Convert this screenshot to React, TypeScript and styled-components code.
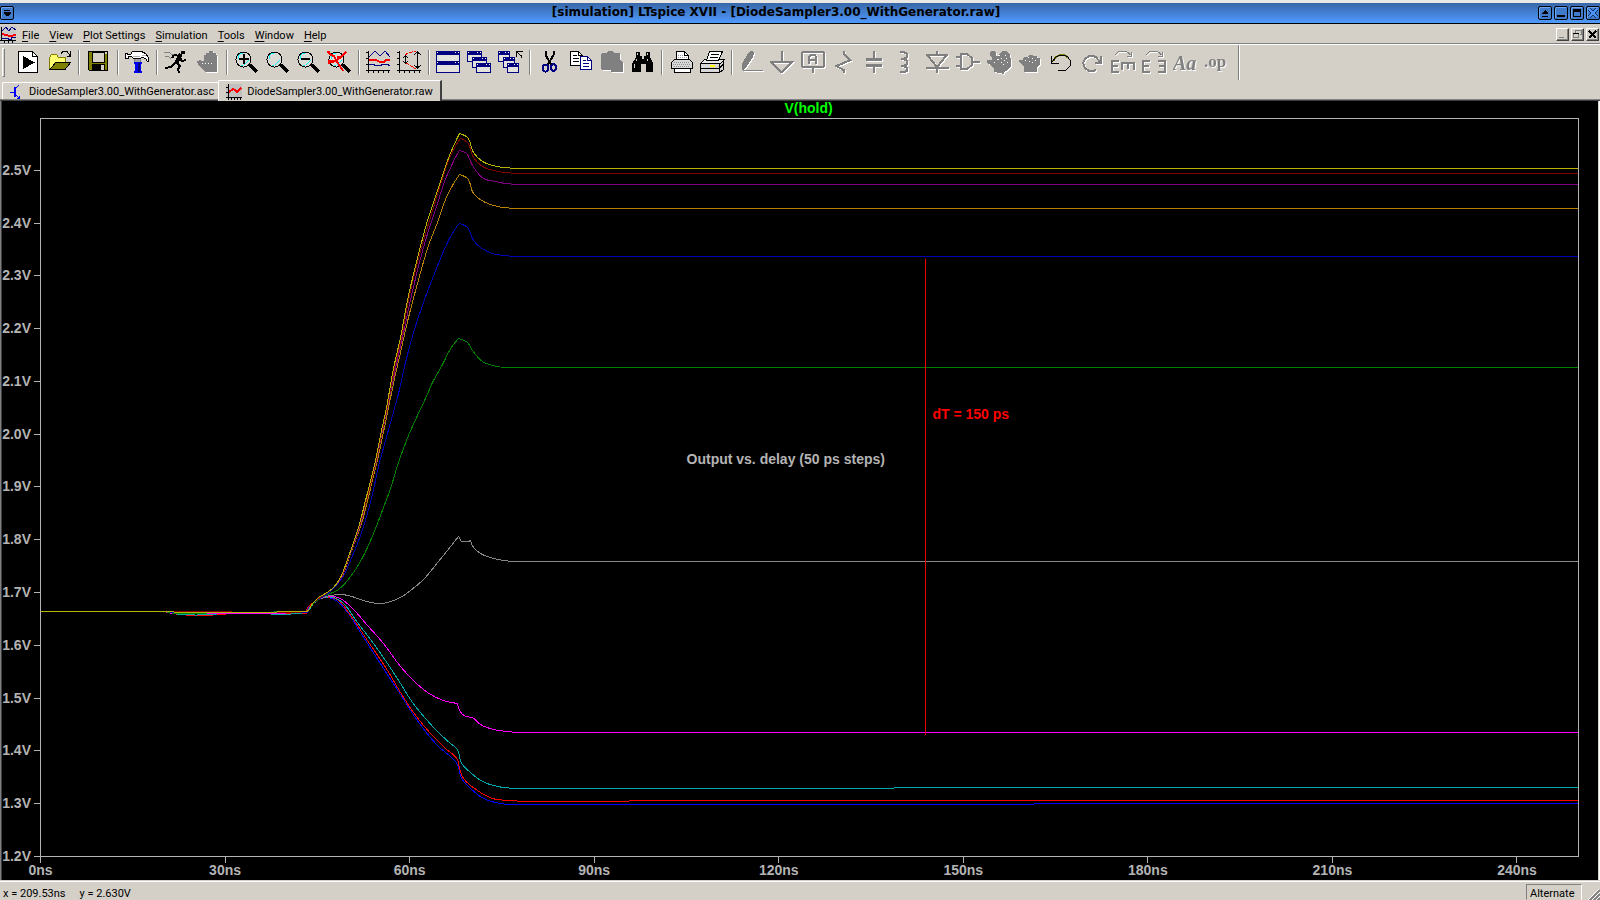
import React from "react";
import styled, { createGlobalStyle, css } from "styled-components";

const Global = createGlobalStyle`
  * { box-sizing: border-box; }
  html, body { margin: 0; padding: 0; background: #d4d0c8; }
  button { font: inherit; color: inherit; margin: 0; padding: 0; border: 0; background: none; }
`;

const FACE = "#d4d0c8";
const SHADOW = "#808080";
const DARK = "#404040";

const Window = styled.div`
  display: flex;
  flex-direction: column;
  min-height: 100vh;
  background: ${FACE};
  color: #000;
  font: 11px/16px Roboto, "Noto Sans", sans-serif;
`;

/* ---------- title bar ---------- */

const TitleBar = styled.header`
  display: flex;
  align-items: center;
  height: 24px;
  border-top: 3px solid #e9e8e5;
  border-bottom: 1px solid #000;
  background: linear-gradient(#3867a8, #4f9aff);
`;

const TitleText = styled.h1`
  flex: 1;
  margin: 0;
  padding: 0 10px 2px;
  text-align: center;
  white-space: nowrap;
  font: bold 12px/18px "DejaVu Sans", sans-serif;
`;

const FrameButtons = styled.div`
  display: flex;
  gap: 2px;
`;

const FrameButton = styled.button`
  display: block;
  width: 14px;
  height: 14px;
  border: 1px solid #000;
  border-radius: 2px;
  background: #3f7acb;
  box-shadow: inset 1px 1px 0 #6aa5f2;
  svg { display: block; }
`;

/* ---------- menu bar ---------- */

const MenuBar = styled.nav`
  display: flex;
  align-items: center;
  height: 21px;
  border-bottom: 1px solid #fff;
  box-shadow: inset 0 -1px 0 ${SHADOW};
`;

const MenuList = styled.div`
  display: flex;
  padding-left: 1px;
`;

const MenuItem = styled.button`
  padding: 3px 5px 0;
  line-height: 17px;
  u { text-underline-offset: 2px; }
`;

const ChildButtons = styled.div`
  display: flex;
  gap: 2px;
  margin-left: auto;
  padding-right: 1px;
`;

const ChildButton = styled.button`
  width: 13px;
  height: 13px;
  border: 1px solid;
  border-color: #fff ${DARK} ${DARK} #fff;
  box-shadow: inset -1px -1px 0 ${SHADOW};
  svg { display: block; }
`;

/* ---------- toolbar ---------- */

const ToolBar = styled.div`
  display: flex;
  align-items: stretch;
  height: 35px;
`;

const Grip = styled.span`
  width: 3px;
  margin: 3px 8px 3px 2px;
  border: 1px solid;
  border-color: #fff ${SHADOW} ${SHADOW} #fff;
`;

const Group = styled.div`
  display: flex;
  & + & {
    margin-left: 8px;
    position: relative;
  }
  & + &::before {
    content: "";
    position: absolute;
    left: -5px;
    top: 5px;
    bottom: 5px;
    width: 2px;
    background: linear-gradient(to right, ${SHADOW} 50%, #fff 50%);
  }
`;

const ToolButton = styled.button`
  display: flex;
  align-items: center;
  justify-content: center;
  width: 31px;
  svg { display: block; }
  &:disabled svg { filter: drop-shadow(1px 1px 0 #fff); }
`;

const BarEnd = styled.span`
  width: 2px;
  margin-left: 6px;
  background: linear-gradient(to right, ${SHADOW} 50%, #fff 50%);
`;

/* ---------- document tabs ---------- */

const TabStrip = styled.div`
  display: flex;
  align-items: flex-end;
  height: 21px;
  padding-left: 2px;
  border-bottom: 1px solid ${DARK};
  box-shadow: inset 0 -1px 0 ${SHADOW};
`;

const Tab = styled.button<{ $active?: boolean }>`
  display: flex;
  align-items: center;
  gap: 5px;
  height: 17px;
  padding: 2px 4px 0 6px;
  border-top: 1px solid #fff;
  border-left: 1px solid #fff;
  border-radius: 2px 0 0 0;
  margin-bottom: 1px;
  white-space: nowrap;
  svg { display: block; }
  ${(p) =>
    p.$active &&
    css`
      height: 21px;
      margin-bottom: -1px;
      padding: 1px 7px 0 7px;
      border-right: 2px solid ${DARK};
      background: ${FACE};
    `}
`;

/* ---------- waveform pane ---------- */

const Pane = styled.main`
  flex: 1;
  display: grid;
  grid-template-columns: 39px 1fr;
  grid-template-rows: 17px 1fr 23px;
  padding-right: 21px;
  background: #000;
  border-left: 1px solid ${SHADOW};
  box-shadow: inset 1px 0 0 ${DARK}, inset -1px 0 0 #fff, inset -2px 0 0 ${FACE};
  color: #b4b4b4;
  font: bold 14px/16px "Liberation Sans", Arial, sans-serif;
`;

const TraceName = styled.h2`
  grid-column: 1 / 3;
  margin: 0;
  padding-left: 37px;
  text-align: center;
  font: inherit;
  line-height: 14px;
  color: #00ff00;
`;

const YAxis = styled.div`
  display: grid;
  grid-auto-rows: 1fr;
`;

const YTick = styled.div`
  display: flex;
  align-items: center;
  justify-content: flex-end;
  align-self: end;
  height: 15px;
  line-height: 15px;
  margin-bottom: -7px;
  &::after {
    content: "";
    width: 6px;
    height: 1px;
    margin-left: 3px;
    background: #b4b4b4;
  }
`;

const Plot = styled.div`
  position: relative;
  min-height: 300px;
  border: 1px solid #b4b4b4;
`;

const Curves = styled.svg`
  position: absolute;
  inset: 0;
  width: 100%;
  height: 100%;
  path, line {
    fill: none;
    stroke-width: 1px;
    vector-effect: non-scaling-stroke;
  }
`;

const Note = styled.span<{ $x: number; $y: number; $color: string }>`
  position: absolute;
  left: ${(p) => p.$x}%;
  top: ${(p) => p.$y}%;
  color: ${(p) => p.$color};
  white-space: nowrap;
`;

const XAxis = styled.div`
  grid-column: 2;
  display: grid;
  grid-template-columns: repeat(8, 30fr) 10fr;
  padding-right: 1px;
`;

const XTick = styled.div`
  display: flex;
  flex-direction: column;
  align-items: center;
  width: 1px;
  line-height: 14px;
  white-space: nowrap;
  &::before {
    content: "";
    flex: none;
    width: 1px;
    height: 6px;
    background: #b4b4b4;
  }
`;

/* ---------- status bar ---------- */

const StatusBar = styled.footer`
  display: flex;
  gap: 14px;
  height: 20px;
  padding: 4px 0 0 3px;
  border-top: 1px solid ${FACE};
  box-shadow: inset 0 1px 0 #fff;
  line-height: 18px;
  overflow: hidden;
`;

const StatusCell = styled.span`
  width: 56px;
  margin: -1px 0 0 auto;
  padding-left: 3px;
  border: 1px solid;
  border-color: ${SHADOW} #fff transparent ${SHADOW};
`;

const SizeGrip = styled.svg`
  display: block;
  margin-left: -8px;
`;

/* ---------- icons ---------- */

const Icon = ({ children, w = 25, h = 25 }: { children: React.ReactNode; w?: number; h?: number }) => (
  <svg width={w} height={h} viewBox={`0 0 ${w} ${h}`} fill="none" shapeRendering="crispEdges" aria-hidden="true">
    {children}
  </svg>
);

const G = "#808080";
const NAVY = "#000080";

const Lens = () => (
  <>
    <path d="M16 15l7 7" stroke="#000" strokeWidth="3" />
    <circle cx="9.5" cy="9.5" r="7.5" fill="#dcdad4" stroke="#000" strokeWidth="1" />
    <path d="M4 9v-3l3-3h2M10 15l5-5M7 15l2 1" stroke="#00ffff" strokeWidth="1" />
  </>
);

const MiniWindow = ({ x, y, w = 14, h = 10 }: { x: number; y: number; w?: number; h?: number }) => (
  <>
    <rect x={x + 0.5} y={y + 0.5} width={w} height={h} fill="#e4e2dd" stroke={NAVY} />
    <path d={`M${x} ${y + 2}h${w + 1}`} stroke={NAVY} strokeWidth="4" />
    <path d={`M${x + 1} ${y + 1.5}h1M${x + w - 4} ${y + 1.5}h1M${x + w - 1} ${y + 1.5}h1`} stroke="#fff" />
  </>
);

const art: Record<string, React.ReactNode> = {
  "New schematic": (
    <>
      <path d="M2.5 1.5h14l5 5v16h-19z" fill="#fff" stroke="#000" />
      <path d="M16.5 1.5v5h5" stroke="#000" />
      <path d="M7 6v13l12-6.5z" fill="#000" />
    </>
  ),
  Open: (
    <>
      <path d="M2.5 19.5v-12l2-3h5l2 3h7v5" fill="#ffff70" stroke="#808000" />
      <path d="M3 19.5l6-7.5h15l-6 7.5z" fill="#808000" stroke="#000" />
      <path d="M14 3.5l2-2h4l3 4M23.5 1v5h-4" stroke="#000" />
    </>
  ),
  Save: (
    <>
      <path d="M2.5 1.5h19v19h-18l-1-1z" fill="#808000" stroke="#000" />
      <path d="M6 2h12v10h-12z" fill={FACE} stroke="#000" />
      <path d="M19 2h2v2h-2z" fill={FACE} />
      <path d="M6 14h13v7h-13z" fill="#000" />
      <path d="M15 15h3v5h-3z" fill={FACE} />
    </>
  ),
  "Control panel": (
    <>
      <path d="M9 12h8v2h-1v7h1v2h-8v-2h1v-7h-1z" fill="#0000f0" />
      <path d="M13 13h2v9h-2z" fill={NAVY} />
      <path d="M10 6h5v6h-5z" fill="#a0a0a0" />
      <path d="M9.5 7v5M15.5 7v5" stroke={G} />
      <path
        d="M.5 7.5v-4h2v1h3l2-3h9l4 2 3 4v4h-1l-2-3-3-1-3 1h-6l-2-2h-3v2h-3z"
        fill="#fff"
        stroke="#000"
      />
      <path d="M8 6.5h7M17 5.5h4" stroke="#b0b0b0" />
    </>
  ),
  Run: (
    <>
      <path d="M17 1h4v3h-4z" fill="#000" />
      <path d="M17 4l-5 9" stroke="#000" strokeWidth="4" />
      <path d="M16 6l-6-1-2 3M16 8l2 3 4-1M12 12l4 4-2 3 1 4M11 13l-4 4-6 1" stroke="#000" strokeWidth="2" />
      <path d="M0 2h5l2 2h3M1 6l4 1 2 2" stroke={G} />
    </>
  ),
  Halt: (
    <>
      <path d="M9 5h2v-2h3v-2h4v2h3v2h1v17h-12l-3-4-4-3-1-4h2v-1h2v1h3z" fill={G} />
      <path d="M7 13h1M10 13h1M13 13h1M16 13h1" stroke="#fff" />
    </>
  ),
  "Zoom in": (
    <>
      <Lens />
      <path d="M5 9h10M10 4v10" stroke="#000" strokeWidth="2" />
    </>
  ),
  "Pan view": <Lens />,
  "Zoom out": (
    <>
      <Lens />
      <path d="M5 9h9" stroke="#000" strokeWidth="2" />
    </>
  ),
  "Zoom full extents": (
    <>
      <Lens />
      <path d="M1 2l3 3 3 1 3 6 3 4 3 5M19 2l-6 6-5 3-3 1-4 1" stroke="#f00" strokeWidth="2" />
      <path d="M0 2h3M1 11h5M10 7h3" stroke="#f00" strokeWidth="2" />
    </>
  ),
  "Pick visible traces": (
    <>
      <path d="M2.5 1v22M0 20.5h24M0 2.5h2M0 8.5h2M0 14.5h2M7.5 21v2M12.5 21v2M17.5 21v2M22.5 21v2" stroke="#000" />
      <path d="M3 7l6-6 5 5 5-5 5 6" stroke={NAVY} />
      <path d="M3 9.5h4l4 1 4 2 4-1 1-2h4" stroke="#f00" strokeWidth="2" />
      <path d="M3 14.5h5v1h7v-1h7v1h2" stroke={NAVY} />
    </>
  ),
  "Autorange y-axis": (
    <>
      <path d="M2.5 1v22M0 20.5h24M0 2.5h2M0 8.5h2M0 14.5h2M7.5 21v2M12.5 21v2M17.5 21v2M22.5 21v2" stroke="#000" />
      <path d="M20.5 2v16M8.5 6v7M17 5l3.5-3 3.5 3M17 15l3.5 3 3.5-3M6 8l2.5-2 2.5 2M6 11l2.5 2 2.5-2" stroke="#000" />
      <path d="M8 5l3-2 4-1 4-1M9 13l5 3 5 3" stroke="#f00" strokeDasharray="4 1" />
    </>
  ),
  "Tile windows": (
    <>
      <MiniWindow x={0} y={1} w={23} h={11} />
      <MiniWindow x={0} y={11} w={23} h={11} />
    </>
  ),
  "Cascade windows": (
    <>
      <MiniWindow x={0} y={1} />
      <MiniWindow x={5} y={7} />
      <MiniWindow x={9} y={13} w={14} h={9} />
    </>
  ),
  "Close windows": (
    <>
      <MiniWindow x={0} y={1} w={11} />
      <MiniWindow x={5} y={7} w={11} />
      <MiniWindow x={9} y={13} w={11} h={9} />
      <path d="M23.5 8v-2l-5-4M18.5 7v-5.5h6" stroke="#000" />
    </>
  ),
  Cut: (
    <>
      <path d="M8.5 1v4l6 10M16.5 1v4l-6 10" stroke="#000" strokeWidth="2" />
      <ellipse cx="8.5" cy="18" rx="2.5" ry="3.5" stroke={NAVY} strokeWidth="2" />
      <ellipse cx="16.5" cy="17.5" rx="2.5" ry="3.5" stroke={NAVY} strokeWidth="2" />
    </>
  ),
  Copy: (
    <>
      <path d="M2.5 1.5h8l4 4v10h-12z" fill="#fff" stroke="#000" />
      <path d="M10.5 1.5v4h4M5 5.5h4M5 8.5h6M5 11.5h6" stroke="#000" />
      <path d="M12.5 6.5h7l4 4v9h-11z" fill="#fff" stroke={NAVY} />
      <path d="M19.5 6.5v4h4M15 10.5h3M15 13.5h6M15 16.5h6" stroke={NAVY} />
    </>
  ),
  Paste: <path d="M2 4l1-1h5l1-2h5l1 2h5l1 1v6l3 3v9h-12v-2h-9l-1-1z" fill={G} />,
  Find: (
    <>
      <path d="M6 2h4v4h2v3h2v-3h2v-4h4v5l3 6v9h-7v-8h-5v8h-9v-8l4-7z" fill="#000" />
      <path d="M7.5 3v2M17.5 3v2M6 9v2M17.5 9v2M4 14v4M14.5 14v1" stroke="#c8d8c0" strokeWidth="1" />
      <path d="M12 7h1v2h-1z" fill="#c8d8c0" />
    </>
  ),
  Print: (
    <>
      <path d="M7.5 9.5v-8h8l4 4v4" fill="#fff" stroke="#000" />
      <path d="M15.5 1.5v4h4" stroke="#000" />
      <path d="M9 5.5h5M9 7.5h9" stroke="#a0a0a0" strokeDasharray="1 1" />
      <path d="M2.5 18.5v-6l3-3h15l3 3v6z" fill="#d8d8d8" stroke="#000" />
      <path d="M5 12.5h16M4 14.5h18M5 16.5h16" stroke="#909090" strokeDasharray="1 1" />
      <path d="M5.5 18.5h16v4h-16z" fill="#fff" stroke="#000" />
    </>
  ),
  "Print preview": (
    <>
      <path d="M.5 13.5l4-4h20l-4 4z" fill="#e8e8e8" stroke="#000" />
      <path d="M6.5 10.5l3-9h13l-4 9z" fill="#fff" stroke="#000" />
      <path d="M11 4.5h8M10 7.5h8" stroke="#000" />
      <path d="M.5 13.5h19v9h-19zM19.5 22.5l4-3v-9M1 18.5h18l4-4" fill="#d8d8d8" stroke="#000" />
      <path d="M10 16h5" stroke="#ffff00" strokeWidth="2" />
    </>
  ),
  Wire: (
    <>
      <path d="M3.5 20.5h20" stroke={G} />
      <path d="M3 20v-6l6-11 2-2h3l1 2-1 4-6 9-4 4z" fill={G} />
    </>
  ),
  Ground: <path d="M11.5 1v10M0 11.5h23l-11 10.5h-1L1 12" stroke={G} strokeWidth="2" />,
  "Label net": (
    <>
      <path d="M2 2h20l1 1v13l-1 1h-20l-1-1v-13z" stroke={G} strokeWidth="2" />
      <path d="M12 17v6M8 14v-7l2-2h4l1 2v7M8 10h7" stroke={G} strokeWidth="2" />
    </>
  ),
  Resistor: <path d="M11.5 1v3l7 6-14 6 7 4v3" stroke={G} strokeWidth="2" />,
  Capacitor: (
    <>
      <path d="M11 1v8M11 16v7" stroke={G} strokeWidth="2" />
      <path d="M3 9.5h16M3 15.5h16" stroke={G} strokeWidth="3" />
    </>
  ),
  Inductor: <path d="M6 2h4l3 2v3l-3 2 3 2v3l-3 2 3 2v3l-3 1h-4M7 9h4M7 16h4" stroke={G} strokeWidth="2" />,
  Diode: <path d="M12 1v4M12 17v6M1 5h22M1 18h23M3 6l9 11 9-11" stroke={G} strokeWidth="2" />,
  Component: <path d="M5 4h6l5 4v7l-5 4h-6zM0 7h5M0 16h5M16 12h8" stroke={G} strokeWidth="2" />,
  Move: (
    <>
      <path d="M7 22v-4l-5-4-2-1v-3h5v-2l-2-2v-4l1-1h4l1 2v3h3l1-3 2-2h4l2 2 2 2v3l1 1v7l-3 4-4 2v2z" fill={G} />
      <path d="M11 5h2M14 8h1M18 5h1M10 9h2M7 12h1M17 10h1M14 12h1M19 8h1M16 14h1M20 12h1" stroke="#fff" />
    </>
  ),
  Drag: (
    <>
      <path d="M6 22v-5l-5-5v-2h4l1-3h3l2-2h3l2 1h3v2h3v6l-3 4v4z" fill={G} />
      <path d="M7 10h1M10 7h1M11 11h1M14 8h1M17 10h1M14 12h1" stroke="#fff" />
    </>
  ),
  Undo: (
    <>
      <path d="M4 11l3-4 4-2h4l5 3" stroke="#808000" strokeWidth="2" />
      <path d="M2.5 6v7h7M3 12l4-5 4-2h4l4 2 3 5-1 4-4 4-4 1-4-1" stroke="#000" />
    </>
  ),
  Redo: <path d="M21 6v7h-6M20 12l-4-5-3-1h-4l-4 3-2 4 2 5 4 3h4l3-1" stroke={G} strokeWidth="2" />,
  Rotate: (
    <>
      <path d="M8 11h-7v11h7M1 16h6M11 20v-7h13M17 13v6M23 13v7" stroke={G} strokeWidth="2" />
      <path d="M3.5 5.5l4-4h8l5 4M20.5 2v4.5h-5" stroke={G} />
    </>
  ),
  Mirror: (
    <>
      <path d="M8 11h-7v11h7M1 16h6M16 11h7v11h-7M17 16h6" stroke={G} strokeWidth="2" />
      <path d="M3.5 5.5l4-4h8l5 4M20.5 2v4.5h-5" stroke={G} />
    </>
  ),
};

const glyphText = (label: string, size: number, italic: boolean, x: number, y: number) => (
  <text
    x={x}
    y={y}
    fill={G}
    fontFamily='"Liberation Serif", serif'
    fontSize={size}
    fontWeight="bold"
    fontStyle={italic ? "italic" : "normal"}
  >
    {label}
  </text>
);
art.Text = glyphText("Aa", 20, true, 0, 20);
art["SPICE directive"] = glyphText(".op", 17, false, 0, 17);

const groups: { names: string[]; disabled?: string[] }[] = [
  { names: ["New schematic", "Open"] },
  { names: ["Save"] },
  { names: ["Control panel"] },
  { names: ["Run", "Halt"], disabled: ["Halt"] },
  { names: ["Zoom in", "Pan view", "Zoom out", "Zoom full extents"] },
  { names: ["Pick visible traces", "Autorange y-axis"] },
  { names: ["Tile windows", "Cascade windows", "Close windows"] },
  { names: ["Cut", "Copy", "Paste", "Find"], disabled: ["Paste"] },
  { names: ["Print", "Print preview"] },
  {
    names: [
      "Wire", "Ground", "Label net", "Resistor", "Capacitor", "Inductor", "Diode", "Component",
      "Move", "Drag", "Undo", "Redo", "Rotate", "Mirror", "Text", "SPICE directive",
    ],
    disabled: [
      "Wire", "Ground", "Label net", "Resistor", "Capacitor", "Inductor", "Diode", "Component",
      "Move", "Drag", "Redo", "Rotate", "Mirror", "Text", "SPICE directive",
    ],
  },
];

const menus: [string, string][] = [
  ["F", "ile"], ["V", "iew"], ["P", "lot Settings"], ["S", "imulation"], ["T", "ools"], ["W", "indow"], ["H", "elp"],
];

/* Traces, lowest settled level first so that the last one is drawn on top. */
const traces: { color: string; points: string }[] = [
  {
    color: "#0000ff",
    points:
      "40,611 163,611 172,613 306,612 307,609 313,602 320,598 328,597 337,601 348,613 360,632 383,668 400,694 412,713 425,731 438,746 455,761 458,767 461,778 467,785 483,798 500,803 515,804 1033,804 1034,803 1578,803",
  },
  {
    color: "#ff0000",
    points:
      "40,611 163,611 178,614 225,614 226,613 306,613 307,607 313,602 320,598 330,597 337,599 348,612 367,640 387,670 400,692 413,712 430,733 445,748 457,759 459,768 463,778 477,790 492,798 510,800 528,801 628,801 629,800 1578,800",
  },
  {
    color: "#00a8a8",
    points:
      "40,611 163,611 180,614 216,614 218,612 258,612 259,613 298,613 307,611 313,603 320,598 333,597 343,603 357,622 373,643 387,663 400,683 412,702 425,718 437,731 450,743 455,747 458,751 459,757 462,764 470,772 482,781 497,786 520,788 893,788 894,787 1578,787",
  },
  {
    color: "#ff00ff",
    points:
      "40,611 163,611 172,613 270,613 307,611 313,603 320,598 333,596 340,598 353,609 367,625 383,643 400,666 413,680 427,692 443,700 457,703 459,710 465,716 472,717 480,724 493,729 507,731 520,732 1578,732",
  },
  {
    color: "#888888",
    points:
      "40,611 163,611 175,613 307,611 313,603 323,597 337,594 348,595 363,600 378,603 387,602 400,597 410,590 423,579 438,561 447,550 458,536 461,541 468,541 470,540 473,547 480,553 490,557 503,560 517,561 1578,561",
  },
  {
    color: "#008000",
    points:
      "40,611 163,611 175,613 307,611 313,603 323,596 330,593 338,589 347,580 357,566 367,547 375,528 383,507 390,488 398,462 408,435 417,415 425,398 433,380 442,364 449,350 453,344 458,338 467,342 472,350 482,361 492,365 508,367 1578,367",
  },
  {
    color: "#0000b4",
    points:
      "40,611 163,611 175,612 307,612 313,602 323,596 330,591 342,577 350,560 360,535 370,502 380,458 397,397 405,362 413,332 423,302 432,278 440,258 449,238 457,225 459,223 467,227 473,240 480,247 492,253 503,255 522,256 1578,256",
  },
  {
    color: "#b48200",
    points:
      "40,611 173,611 290,612 307,611 313,602 323,595 332,588 341,577 350,553 362,520 370,488 380,446 393,383 400,352 408,317 417,283 428,245 437,222 445,199 452,185 459,174 467,178 473,193 483,201 493,205 503,207 527,208 1578,208",
  },
  {
    color: "#820082",
    points:
      "40,611 173,611 290,612 307,611 313,602 323,595 332,588 341,577 348,558 359,527 366,500 376,460 380,440 387,407 395,368 402,337 411,295 420,258 428,230 437,203 444,181 452,163 457,153 459,150 466,153 472,165 483,178 495,181 505,183 531,184 1578,184",
  },
  {
    color: "#820000",
    points:
      "40,611 173,611 290,612 307,611 313,602 323,595 332,588 341,576 348,557 358,528 366,500 376,459 380,438 387,405 394,368 401,337 409,295 418,258 426,230 433,207 442,178 448,160 457,142 460,138 467,142 473,157 482,166 493,170 504,172 528,173 1578,173",
  },
  {
    color: "#b4b400",
    points:
      "40,611 173,611 174,612 276,612 277,611 307,611 313,602 318,597 325,593 332,588 340,577 347,559 358,527 365,500 375,460 380,435 386,407 393,368 400,337 408,295 417,258 425,227 433,202 441,178 449,155 457,137 459,133 467,137 473,152 482,161 492,165 503,167 526,168 1578,168",
  },
];

/* Joins the samples with cubic segments; sharp turns and long flat runs stay straight. */
function smoothPath(points: string): string {
  const p = points.split(" ").map((s) => s.split(",").map(Number));
  const len = (i: number) => Math.hypot(p[i + 1][0] - p[i][0], p[i + 1][1] - p[i][1]);
  const dir = (i: number) => [(p[i + 1][0] - p[i][0]) / len(i), (p[i + 1][1] - p[i][1]) / len(i)];
  const tangent = (i: number) => {
    if (i === 0 || i === p.length - 1) return [0, 0];
    const a = dir(i - 1);
    const b = dir(i);
    if (a[0] * b[0] + a[1] * b[1] < 0.7 || len(i - 1) < 4 || len(i) < 4) return [0, 0];
    if (len(i - 1) > 50) return a;
    if (len(i) > 50) return b;
    const s = [a[0] + b[0], a[1] + b[1]];
    const l = Math.hypot(s[0], s[1]);
    return [s[0] / l, s[1] / l];
  };
  let d = `M${p[0][0]} ${p[0][1]}`;
  for (let i = 0; i < p.length - 1; i++) {
    const [x, y] = p[i + 1];
    if (len(i) > 50) {
      d += `L${x} ${y}`;
      continue;
    }
    const k = len(i) / 3;
    const t = tangent(i);
    const u = tangent(i + 1);
    d += `C${p[i][0] + t[0] * k} ${p[i][1] + t[1] * k} ${x - u[0] * k} ${y - u[1] * k} ${x} ${y}`;
  }
  return d;
}

const volts = ["2.5V", "2.4V", "2.3V", "2.2V", "2.1V", "2.0V", "1.9V", "1.8V", "1.7V", "1.6V", "1.5V", "1.4V", "1.3V", "1.2V"];
const times = ["0ns", "30ns", "60ns", "90ns", "120ns", "150ns", "180ns", "210ns", "240ns"];

export default function App() {
  return (
    <Window>
      <Global />
      <TitleBar>
        <FrameButton aria-label="Window menu">
          <Icon w={12} h={12}>
            <path d="M3 3h6M3 5h6v1h-1v1h-1v1h-2v-1h-1v-1h-1z" fill="#000" stroke="#000" />
          </Icon>
        </FrameButton>
        <TitleText>[simulation] LTspice XVII - [DiodeSampler3.00_WithGenerator.raw]</TitleText>
        <FrameButtons>
          <FrameButton aria-label="Shade">
            <Icon w={12} h={12}>
              <path d="M3 9h6v1h-6zM3 7v-1h1v-1h1v-1h1v-1h1v1h1v1h1v2z" fill="#000" />
            </Icon>
          </FrameButton>
          <FrameButton aria-label="Minimize">
            <Icon w={12} h={12}><path d="M2 8h8v2h-8z" fill="#000" /></Icon>
          </FrameButton>
          <FrameButton aria-label="Maximize">
            <Icon w={12} h={12}><path d="M2 2h8v8h-8zM3 5v4h6v-4z" fill="#000" fillRule="evenodd" /></Icon>
          </FrameButton>
          <FrameButton aria-label="Close">
            <Icon w={12} h={12}>
              <path d="M2 2l8 8M10 2l-8 8" stroke="#12305c" strokeWidth="3" />
              <path d="M2 2l8 8M10 2l-8 8" stroke="#4a92f5" strokeWidth="2" />
            </Icon>
          </FrameButton>
        </FrameButtons>
      </TitleBar>

      <MenuBar aria-label="Main menu">
        <Icon w={16} h={17}>
          <path d="M0 0h16v17h-16z" fill="#c8c8c8" />
          <path d="M1.5 1v14M0 14.5h16M4.5 15v2M8.5 15v2M12.5 15v2" stroke="#000" />
          <path d="M2 5l4-4 3 4 3-4 4 3" stroke={NAVY} />
          <path d="M2 8l4 1 4 1 6-1" stroke="#f00" strokeWidth="2" />
          <path d="M2 12.5h6v1h3v-2h5" stroke={NAVY} />
        </Icon>
        <MenuList>
          {menus.map(([k, rest]) => (
            <MenuItem key={k}><u>{k}</u>{rest}</MenuItem>
          ))}
        </MenuList>
        <ChildButtons>
          <ChildButton aria-label="Minimize document">
            <Icon w={11} h={11}><path d="M2 8.5h5" stroke={G} strokeWidth="1" /></Icon>
          </ChildButton>
          <ChildButton aria-label="Restore document">
            <Icon w={11} h={11}><path d="M3.5 4v-2.5h6v4h-2M1.5 4.5h5v4h-5z" stroke={G} /><path d="M1 4.5h6" stroke="#000" /></Icon>
          </ChildButton>
          <ChildButton aria-label="Close document">
            <Icon w={11} h={11}><path d="M2 2l7 7M9 2l-7 7" stroke="#000" strokeWidth="2" /></Icon>
          </ChildButton>
        </ChildButtons>
      </MenuBar>

      <ToolBar role="toolbar" aria-label="Tools">
        <Grip />
        {groups.map((g) => (
          <Group key={g.names[0]}>
            {g.names.map((n) => (
              <ToolButton key={n} aria-label={n} disabled={g.disabled?.includes(n)}>
                <Icon>{art[n]}</Icon>
              </ToolButton>
            ))}
          </Group>
        ))}
        <BarEnd />
      </ToolBar>

      <TabStrip role="tablist">
        <Tab role="tab" aria-selected={false}>
          <Icon w={15} h={16}>
            <path d="M1 8h5M10 1l-4 4M6 10l5 5" stroke="#0000ff" strokeWidth="1" />
            <path d="M6 3v10" stroke="#0000ff" strokeWidth="2" />
            <path d="M11 11v4h-4z" fill="#0000ff" />
          </Icon>
          DiodeSampler3.00_WithGenerator.asc
        </Tab>
        <Tab role="tab" aria-selected $active>
          <Icon w={16} h={16}>
            <path d="M0 0h16v15h-16z" fill="#c0c0c0" />
            <path d="M2.5 0v16M0 13.5h16M0 3.5h2M0 8.5h2M5.5 14v2M8.5 14v2M11.5 14v2M14.5 14v2" stroke="#000" />
            <path d="M3 8l4-3 2 1 2 2 4-4" stroke="#f00" strokeWidth="2" />
          </Icon>
          DiodeSampler3.00_WithGenerator.raw
        </Tab>
      </TabStrip>

      <Pane>
        <TraceName>V(hold)</TraceName>
        <YAxis>
          {volts.map((v) => <YTick key={v}>{v}</YTick>)}
        </YAxis>
        <Plot>
          <Curves viewBox="41 119 1537 737" preserveAspectRatio="none" shapeRendering="crispEdges" aria-label="V(hold) against time">
            <g transform="translate(0.5 0.5)">
              {traces.map((t) => <path key={t.color} d={smoothPath(t.points)} stroke={t.color} />)}
              <line x1="925" y1="258" x2="925" y2="734" stroke="#f00000" />
            </g>
          </Curves>
          <Note $x={58} $y={39} $color="#ff0000">dT = 150 ps</Note>
          <Note $x={42} $y={45} $color="#b4b4b4">Output vs. delay (50 ps steps)</Note>
        </Plot>
        <XAxis>
          {times.map((t) => <XTick key={t}>{t}</XTick>)}
        </XAxis>
      </Pane>

      <StatusBar>
        <span>x = 209.53ns</span>
        <span>y = 2.630V</span>
        <StatusCell>Alternate</StatusCell>
        <SizeGrip width="12" height="17" viewBox="0 0 12 17" aria-hidden="true">
          <path d="M0 17L12 5M4 17l8-8M8 17l4-4" stroke={G} strokeWidth="2" />
          <path d="M-1 16L11 4M3 16l9-9M7 16l5-5" stroke="#fff" />
        </SizeGrip>
      </StatusBar>
    </Window>
  );
}
